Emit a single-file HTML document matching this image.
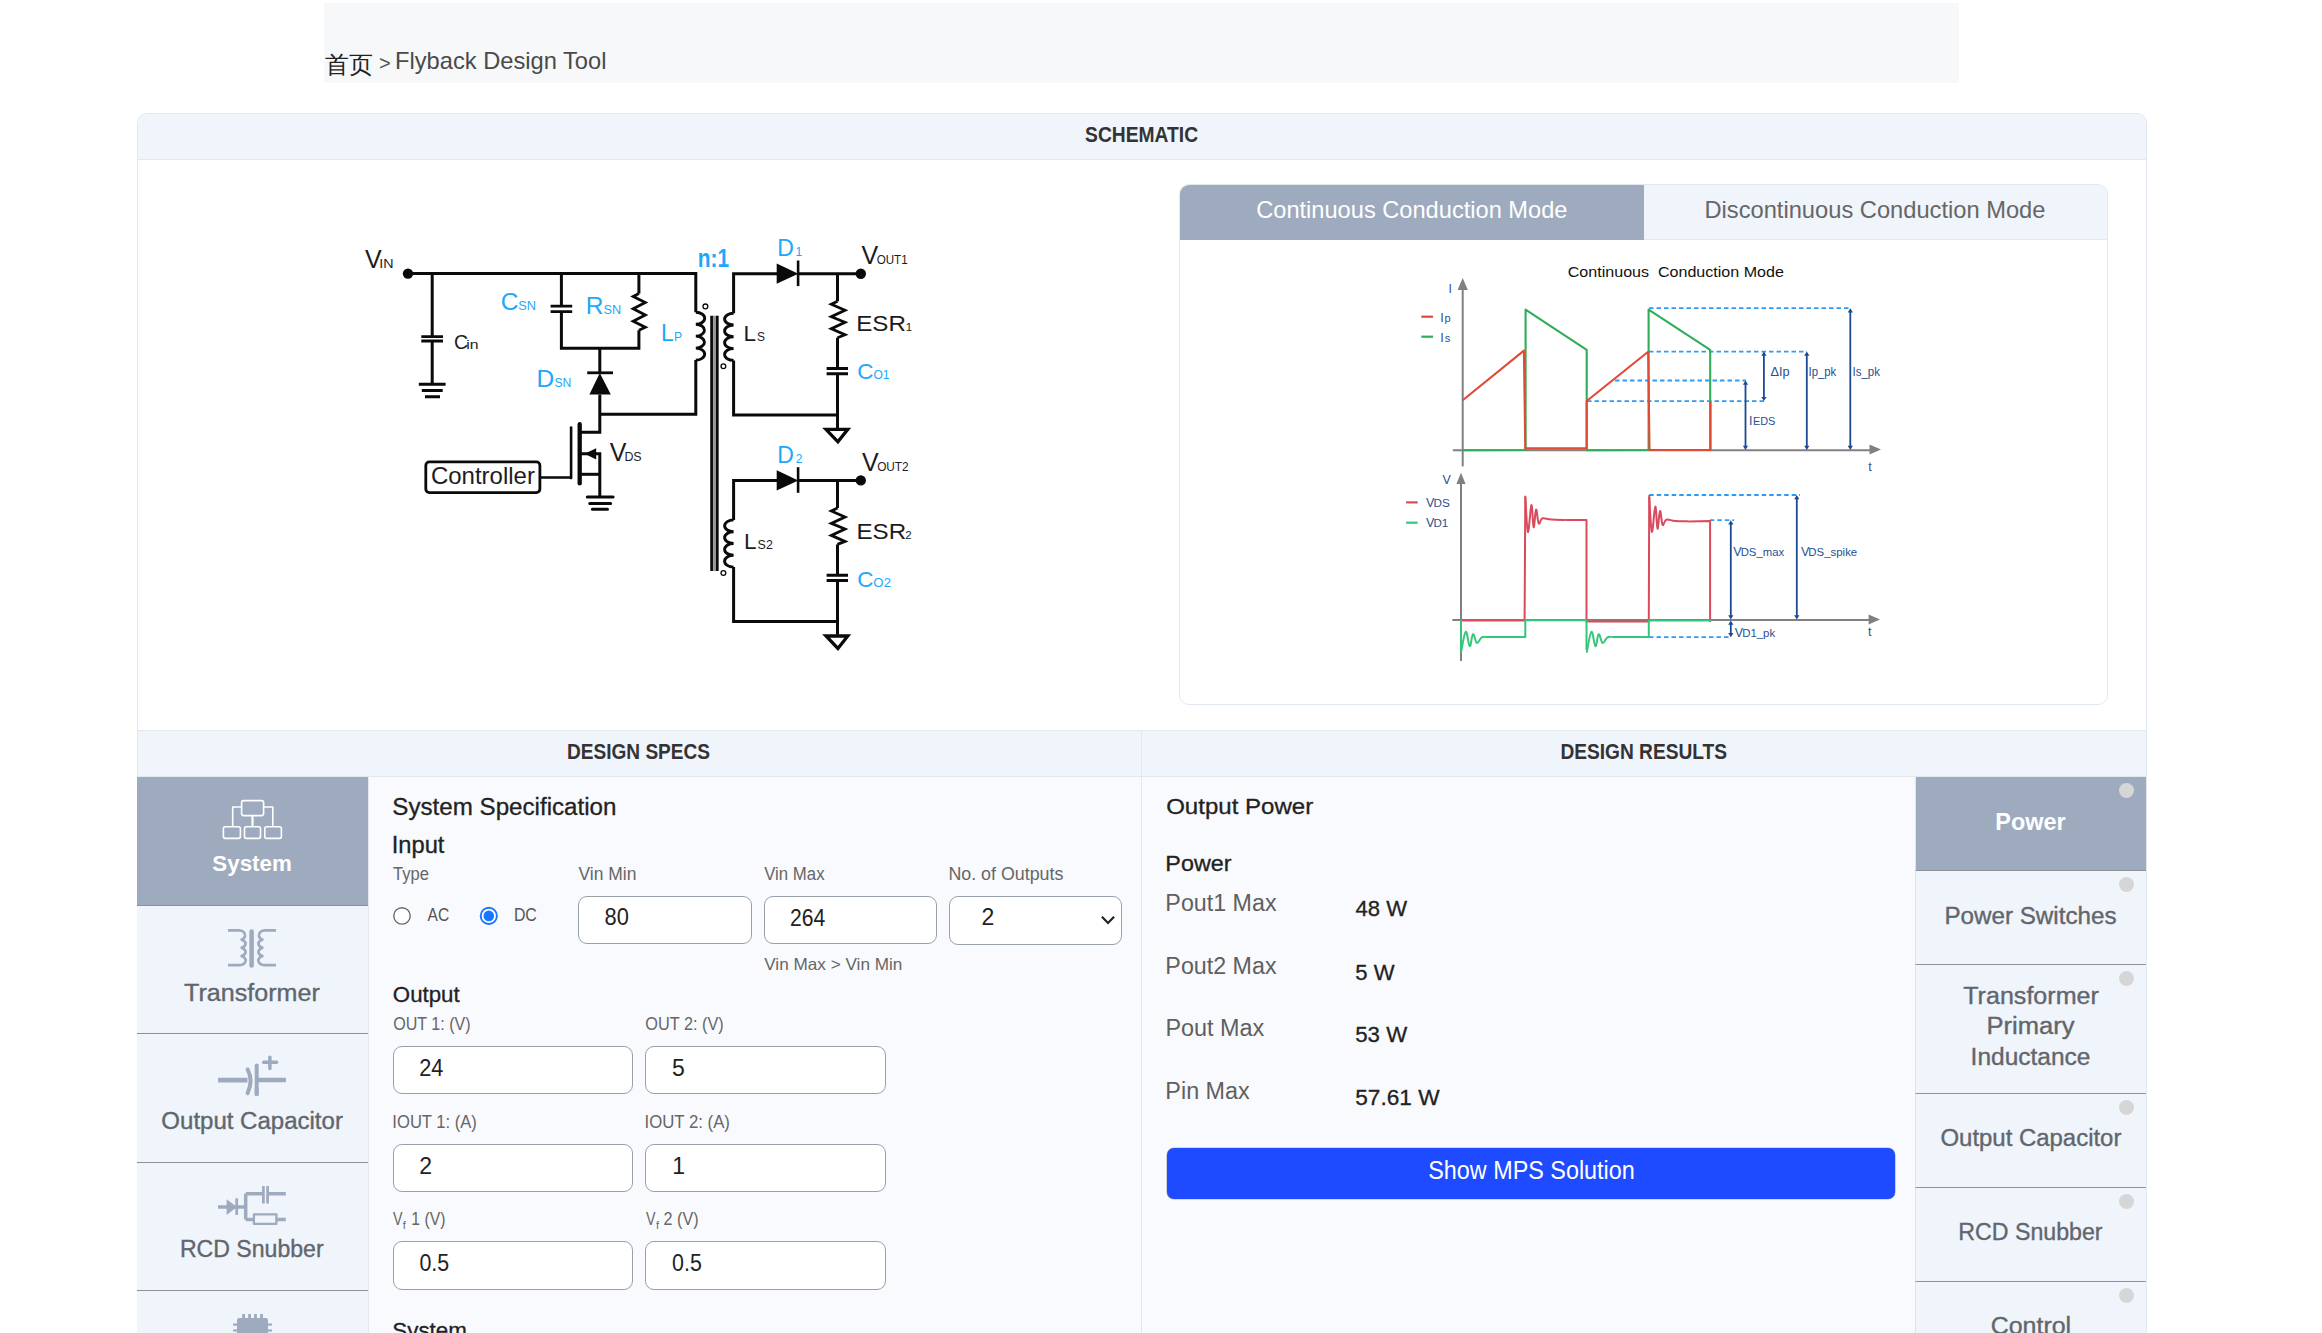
<!DOCTYPE html><html><head><meta charset="utf-8"><title>Flyback Design Tool</title><style>
*{box-sizing:border-box;margin:0;padding:0}
html,body{width:2322px;height:1333px;overflow:hidden;background:#fff;font-family:"Liberation Sans",sans-serif}
.a{position:absolute}
#crumb{left:324px;top:3px;width:1635px;height:80px;background:#f7f8fa}
#schem{left:137px;top:113px;width:2010px;height:618px;border:1px solid #e2e8f0;border-bottom:none;border-radius:10px 10px 0 0;background:#fff}
#schemh{left:138px;top:114px;width:2008px;height:46px;background:#f0f4fb;border-bottom:1px solid #e2e8f0;border-radius:9px 9px 0 0}
#chart{left:1179px;top:184px;width:929px;height:521px;border:1px solid #e2e8f0;border-radius:10px;background:#fff}
#ccm{left:1180px;top:185px;width:464px;height:55px;background:#9eabbe;border-radius:9px 0 0 0}
#dcm{left:1644px;top:185px;width:463px;height:55px;background:#f0f4fb;border-radius:0 9px 0 0;border-bottom:1px solid #e2e8f0}
#ccmline{left:1180px;top:239px;width:464px;height:1px;background:#e2e8f0}
#dsh{left:137px;top:730px;width:2010px;height:47px;background:#f0f4fb;border:1px solid #e2e8f0}
#dsb{left:137px;top:777px;width:2010px;height:600px;background:#f8fafd;border-left:1px solid #e2e8f0;border-right:1px solid #e2e8f0}
#vdiv{left:1141px;top:730px;width:1px;height:603px;background:#e2e8f0}
.tab{position:absolute;background:#f0f4fb;border-bottom:1px solid #8e9298}
.sel{background:#9eabbe}
.inp{position:absolute;background:#fff;border:1px solid #98a0aa;border-radius:9px}
#btn{left:1167px;top:1148px;width:728px;height:51px;background:#1e4bff;border-radius:7px;box-shadow:0 0 0 0.6px rgba(60,60,60,.35)}
.dot{position:absolute;width:15px;height:15px;border-radius:50%;background:#d6d6d6}
svg{position:absolute;left:0;top:0}
text{font-family:"Liberation Sans",sans-serif}
</style></head><body>
<div class="a" id="crumb"></div>
<div class="a" id="schem"></div><div class="a" id="schemh"></div>
<div class="a" id="chart"></div><div class="a" id="ccm"></div><div class="a" id="dcm"></div>
<div class="a" id="dsh"></div><div class="a" id="dsb"></div><div class="a" id="vdiv"></div>
<div class="tab sel" style="left:137px;top:777px;width:231px;height:129px"></div>
<div class="tab" style="left:137px;top:906px;width:231px;height:128px"></div>
<div class="tab" style="left:137px;top:1034px;width:231px;height:129px"></div>
<div class="tab" style="left:137px;top:1163px;width:231px;height:128px"></div>
<div class="tab" style="left:137px;top:1291px;width:231px;height:129px"></div>
<div class="tab sel" style="left:1915px;top:777px;width:231px;height:94px;border-left:1px solid #dfe4ec"></div>
<div class="dot" style="left:2119px;top:783px"></div>
<div class="tab" style="left:1915px;top:871px;width:231px;height:94px;border-left:1px solid #dfe4ec"></div>
<div class="dot" style="left:2119px;top:877px"></div>
<div class="tab" style="left:1915px;top:965px;width:231px;height:129px;border-left:1px solid #dfe4ec"></div>
<div class="dot" style="left:2119px;top:971px"></div>
<div class="tab" style="left:1915px;top:1094px;width:231px;height:94px;border-left:1px solid #dfe4ec"></div>
<div class="dot" style="left:2119px;top:1100px"></div>
<div class="tab" style="left:1915px;top:1188px;width:231px;height:94px;border-left:1px solid #dfe4ec"></div>
<div class="dot" style="left:2119px;top:1194px"></div>
<div class="tab" style="left:1915px;top:1282px;width:231px;height:118px;border-left:1px solid #dfe4ec"></div>
<div class="dot" style="left:2119px;top:1288px"></div>
<div class="inp" style="left:578px;top:896px;width:174px;height:48px"></div>
<div class="inp" style="left:764px;top:896px;width:173px;height:48px"></div>
<div class="inp" style="left:949px;top:896px;width:173px;height:49px"></div>
<div class="inp" style="left:393px;top:1046px;width:240px;height:48px"></div>
<div class="inp" style="left:645px;top:1046px;width:241px;height:48px"></div>
<div class="inp" style="left:393px;top:1144px;width:240px;height:48px"></div>
<div class="inp" style="left:645px;top:1144px;width:241px;height:48px"></div>
<div class="inp" style="left:393px;top:1241px;width:240px;height:49px"></div>
<div class="inp" style="left:645px;top:1241px;width:241px;height:49px"></div>
<div class="a" id="btn"></div>
<div class="a" style="left:368px;top:777px;width:1px;height:556px;background:#e3e8ef"></div>
<svg width="2322" height="1333" viewBox="0 0 2322 1333"><text x="324.5" y="73.3" font-size="24" fill="#222">首页</text><text x="379.11" y="70.2" font-size="20" fill="#555" >&gt;</text><text x="394.99" y="69.0" font-size="24" fill="#4a4a4a" textLength="211.48" lengthAdjust="spacingAndGlyphs" >Flyback Design Tool</text><text x="1085.05" y="141.7" font-size="21.5" fill="#333" font-weight="700" textLength="113.07" lengthAdjust="spacingAndGlyphs" >SCHEMATIC</text><text x="567.02" y="759.1" font-size="21.5" fill="#333" font-weight="700" textLength="143.02" lengthAdjust="spacingAndGlyphs" >DESIGN SPECS</text><text x="1560.43" y="759.1" font-size="21.5" fill="#333" font-weight="700" textLength="166.61" lengthAdjust="spacingAndGlyphs" >DESIGN RESULTS</text><text x="1256.20" y="217.8" font-size="24.5" fill="#fff" textLength="311.25" lengthAdjust="spacingAndGlyphs" >Continuous Conduction Mode</text><text x="1704.46" y="217.8" font-size="24.5" fill="#666" textLength="341.00" lengthAdjust="spacingAndGlyphs" >Discontinuous Conduction Mode</text><circle cx="408" cy="273.6" r="5.2" fill="#0a0a0a"/><path d="M408,273.6 H695.8 V312.2" fill="none" stroke="#0a0a0a" stroke-width="3.0" stroke-linecap="butt" stroke-linejoin="miter" /><path d="M432.2,273.6 V336.6" fill="none" stroke="#0a0a0a" stroke-width="3.0" stroke-linecap="butt" stroke-linejoin="miter" /><path d="M421.3,336.6 H443 M421.3,341 H443" fill="none" stroke="#0a0a0a" stroke-width="2.8" stroke-linecap="butt" stroke-linejoin="miter" /><path d="M432.2,341 V384.2" fill="none" stroke="#0a0a0a" stroke-width="3.0" stroke-linecap="butt" stroke-linejoin="miter" /><path d="M418.8,384.2 H445.6 M421.8,390.6 H442.7 M425,396.7 H440" fill="none" stroke="#0a0a0a" stroke-width="3.0" stroke-linecap="butt" stroke-linejoin="miter" /><path d="M561.4,273.6 V306.2" fill="none" stroke="#0a0a0a" stroke-width="3.0" stroke-linecap="butt" stroke-linejoin="miter" /><path d="M550.6,306.2 H572.2 M550.6,311.6 H572.2" fill="none" stroke="#0a0a0a" stroke-width="2.8" stroke-linecap="butt" stroke-linejoin="miter" /><path d="M561.4,311.6 V348.2 H638.9 V330.2" fill="none" stroke="#0a0a0a" stroke-width="3.0" stroke-linecap="butt" stroke-linejoin="miter" /><path d="M638.9,273.6 V293.6" fill="none" stroke="#0a0a0a" stroke-width="3.0" stroke-linecap="butt" stroke-linejoin="miter" /><path d="M638.9,293.6 L633.2,296.5 L645.3,302.6 L633.2,308.8 L645.3,315.0 L633.2,321.2 L645.3,327.3 L638.9,330.2" fill="none" stroke="#0a0a0a" stroke-width="2.8" stroke-linecap="butt" stroke-linejoin="miter" /><path d="M599.8,348.2 V372.8" fill="none" stroke="#0a0a0a" stroke-width="3.0" stroke-linecap="butt" stroke-linejoin="miter" /><path d="M587.2,372.8 H613" fill="none" stroke="#0a0a0a" stroke-width="2.8" stroke-linecap="butt" stroke-linejoin="miter" /><polygon points="599.8,373 589.4,394.6 610.8,394.6" fill="#0a0a0a"/><path d="M599.8,394.5 V432.3 H580" fill="none" stroke="#0a0a0a" stroke-width="3.0" stroke-linecap="butt" stroke-linejoin="miter" /><path d="M599.8,414.3 H695.8 V360.1" fill="none" stroke="#0a0a0a" stroke-width="3.0" stroke-linecap="butt" stroke-linejoin="miter" /><path d="M695.8,312.2 A8.9,5.987500000000004 0 0 1 695.8,324.18 A8.9,5.987500000000004 0 0 1 695.8,336.15 A8.9,5.987500000000004 0 0 1 695.8,348.12 A8.9,5.987500000000004 0 0 1 695.8,360.10" fill="none" stroke="#0a0a0a" stroke-width="2.9" stroke-linecap="butt" stroke-linejoin="miter" /><circle cx="705.4" cy="306.4" r="2.4" fill="none" stroke="#0a0a0a" stroke-width="1.3"/><rect x="712.8" y="315.7" width="3.4" height="255.3" fill="#9a9a9a"/><path d="M711.6,315.7 V571 M717.3,315.7 V571" fill="none" stroke="#0a0a0a" stroke-width="2.7" stroke-linecap="butt" stroke-linejoin="miter" /><path d="M579.7,424.2 V483.4" fill="none" stroke="#0a0a0a" stroke-width="4.3" stroke-linecap="round" stroke-linejoin="miter" /><path d="M571.1,427.5 V478.1" fill="none" stroke="#0a0a0a" stroke-width="2.6" stroke-linecap="round" stroke-linejoin="miter" /><path d="M539.9,477.5 H571.1" fill="none" stroke="#0a0a0a" stroke-width="2.6" stroke-linecap="butt" stroke-linejoin="miter" /><path d="M579.7,453.8 H599.8 V496.9" fill="none" stroke="#0a0a0a" stroke-width="3.0" stroke-linecap="butt" stroke-linejoin="miter" /><polygon points="584.6,453.8 596.2,448.2 596.2,459.4" fill="#0a0a0a"/><path d="M579.7,474.3 H599.8" fill="none" stroke="#0a0a0a" stroke-width="3.0" stroke-linecap="butt" stroke-linejoin="miter" /><path d="M587.3,496.9 H613.1 M589.7,503.4 H610.6 M592.4,509.3 H607.5" fill="none" stroke="#0a0a0a" stroke-width="3.0" stroke-linecap="round" stroke-linejoin="miter" /><rect x="425.8" y="461.9" width="114.1" height="30.7" rx="3.5" fill="none" stroke="#0a0a0a" stroke-width="2.8"/><path d="M733.6,313.2 V273.7 H777" fill="none" stroke="#0a0a0a" stroke-width="3.0" stroke-linecap="butt" stroke-linejoin="miter" /><polygon points="776.7,263.6 776.7,283.8 798.3,273.7" fill="#0a0a0a"/><path d="M798.1,260.5 V286.1" fill="none" stroke="#0a0a0a" stroke-width="2.6" stroke-linecap="butt" stroke-linejoin="miter" /><path d="M798.1,273.7 H860.8" fill="none" stroke="#0a0a0a" stroke-width="3.0" stroke-linecap="butt" stroke-linejoin="miter" /><circle cx="860.8" cy="273.7" r="5.2" fill="#0a0a0a"/><path d="M733.6,313.2 A9.0,5.899999999999999 0 0 0 733.6,325.00 A9.0,5.899999999999999 0 0 0 733.6,336.80 A9.0,5.899999999999999 0 0 0 733.6,348.60 A9.0,5.899999999999999 0 0 0 733.6,360.40" fill="none" stroke="#0a0a0a" stroke-width="2.9" stroke-linecap="butt" stroke-linejoin="miter" /><circle cx="723.4" cy="366.3" r="2.4" fill="none" stroke="#0a0a0a" stroke-width="1.3"/><path d="M733.6,360.4 V414.9 H837.5" fill="none" stroke="#0a0a0a" stroke-width="3.0" stroke-linecap="butt" stroke-linejoin="miter" /><path d="M837.5,273.7 V301.3" fill="none" stroke="#0a0a0a" stroke-width="3.0" stroke-linecap="butt" stroke-linejoin="miter" /><path d="M837.5,301.3 L831.3,304.3 L845,310.3 L831.3,316.7 L845,322.3 L831.3,328.7 L845,334.7 L837.5,337.7" fill="none" stroke="#0a0a0a" stroke-width="2.8" stroke-linecap="butt" stroke-linejoin="miter" /><path d="M837.5,337.7 V368.5" fill="none" stroke="#0a0a0a" stroke-width="3.0" stroke-linecap="butt" stroke-linejoin="miter" /><path d="M826.6,368.5 H848 M826.6,373.8 H848" fill="none" stroke="#0a0a0a" stroke-width="2.9" stroke-linecap="butt" stroke-linejoin="miter" /><path d="M837.5,373.8 V428.1" fill="none" stroke="#0a0a0a" stroke-width="3.0" stroke-linecap="butt" stroke-linejoin="miter" /><polygon points="826,429.3 847.8,429.3 837.9,441.8" fill="none" stroke="#0a0a0a" stroke-width="3.3" stroke-linejoin="miter"/><path d="M733.6,519.9 V480.4 H777" fill="none" stroke="#0a0a0a" stroke-width="3.0" stroke-linecap="butt" stroke-linejoin="miter" /><polygon points="776.7,470.3 776.7,490.5 798.3,480.4" fill="#0a0a0a"/><path d="M798.1,467.2 V492.8" fill="none" stroke="#0a0a0a" stroke-width="2.6" stroke-linecap="butt" stroke-linejoin="miter" /><path d="M798.1,480.4 H860.8" fill="none" stroke="#0a0a0a" stroke-width="3.0" stroke-linecap="butt" stroke-linejoin="miter" /><circle cx="860.8" cy="480.4" r="5.2" fill="#0a0a0a"/><path d="M733.6,519.9 A9.0,5.8999999999999915 0 0 0 733.6,531.70 A9.0,5.8999999999999915 0 0 0 733.6,543.50 A9.0,5.8999999999999915 0 0 0 733.6,555.30 A9.0,5.8999999999999915 0 0 0 733.6,567.10" fill="none" stroke="#0a0a0a" stroke-width="2.9" stroke-linecap="butt" stroke-linejoin="miter" /><circle cx="723.4" cy="573.0" r="2.4" fill="none" stroke="#0a0a0a" stroke-width="1.3"/><path d="M733.6,567.0999999999999 V621.5999999999999 H837.5" fill="none" stroke="#0a0a0a" stroke-width="3.0" stroke-linecap="butt" stroke-linejoin="miter" /><path d="M837.5,480.4 V508.0" fill="none" stroke="#0a0a0a" stroke-width="3.0" stroke-linecap="butt" stroke-linejoin="miter" /><path d="M837.5,508.0 L831.3,511.0 L845,517.0 L831.3,523.4 L845,529.0 L831.3,535.4 L845,541.4 L837.5,544.4" fill="none" stroke="#0a0a0a" stroke-width="2.8" stroke-linecap="butt" stroke-linejoin="miter" /><path d="M837.5,544.4 V575.2" fill="none" stroke="#0a0a0a" stroke-width="3.0" stroke-linecap="butt" stroke-linejoin="miter" /><path d="M826.6,575.2 H848 M826.6,580.5 H848" fill="none" stroke="#0a0a0a" stroke-width="2.9" stroke-linecap="butt" stroke-linejoin="miter" /><path d="M837.5,580.5 V634.8" fill="none" stroke="#0a0a0a" stroke-width="3.0" stroke-linecap="butt" stroke-linejoin="miter" /><polygon points="826,636.0 847.8,636.0 837.9,648.5" fill="none" stroke="#0a0a0a" stroke-width="3.3" stroke-linejoin="miter"/><text x="365.09" y="268.4" font-size="25" fill="#1c1c1c" >V</text><text x="379.28" y="268.4" font-size="12.5" fill="#1c1c1c" textLength="14.28" lengthAdjust="spacingAndGlyphs" >IN</text><text x="454.11" y="348.5" font-size="19.5" fill="#1c1c1c" >C</text><text x="466.24" y="348.5" font-size="12" fill="#1c1c1c" textLength="12.28" lengthAdjust="spacingAndGlyphs" >in</text><text x="500.76" y="309.8" font-size="24.5" fill="#1ea7fb" >C</text><text x="518.22" y="309.8" font-size="12.2" fill="#1ea7fb" textLength="17.83" lengthAdjust="spacingAndGlyphs" >SN</text><text x="585.79" y="314.0" font-size="24.5" fill="#1ea7fb" >R</text><text x="603.62" y="314.0" font-size="12.2" fill="#1ea7fb" textLength="17.61" lengthAdjust="spacingAndGlyphs" >SN</text><text x="661.01" y="341.0" font-size="23" fill="#1ea7fb" >L</text><text x="674.00" y="341.0" font-size="12.2" fill="#1ea7fb" >P</text><text x="536.59" y="387.3" font-size="24.5" fill="#1ea7fb" >D</text><text x="554.45" y="387.3" font-size="12.2" fill="#1ea7fb" textLength="16.95" lengthAdjust="spacingAndGlyphs" >SN</text><text x="697.72" y="267.0" font-size="25" fill="#1ea7fb" font-weight="700" textLength="31.36" lengthAdjust="spacingAndGlyphs" >n:1</text><text x="777.21" y="256.4" font-size="23" fill="#1ea7fb" >D</text><text x="795.39" y="256.4" font-size="12" fill="#1ea7fb" >1</text><text x="777.21" y="463.3" font-size="23" fill="#1ea7fb" >D</text><text x="795.70" y="463.3" font-size="12" fill="#1ea7fb" >2</text><text x="861.59" y="263.8" font-size="25" fill="#1c1c1c" >V</text><text x="876.65" y="263.8" font-size="12.5" fill="#1c1c1c" textLength="31.02" lengthAdjust="spacingAndGlyphs" >OUT1</text><text x="862.09" y="470.6" font-size="25" fill="#1c1c1c" >V</text><text x="877.14" y="470.6" font-size="12.5" fill="#1c1c1c" textLength="31.56" lengthAdjust="spacingAndGlyphs" >OUT2</text><text x="856.22" y="330.5" font-size="22.3" fill="#1c1c1c" textLength="49.70" lengthAdjust="spacingAndGlyphs" >ESR</text><text x="905.82" y="330.5" font-size="11.5" fill="#1c1c1c" >1</text><text x="856.42" y="538.6" font-size="22.3" fill="#1c1c1c" textLength="49.70" lengthAdjust="spacingAndGlyphs" >ESR</text><text x="905.22" y="538.6" font-size="11.5" fill="#1c1c1c" >2</text><text x="743.45" y="341.4" font-size="22.5" fill="#1c1c1c" >L</text><text x="757.06" y="341.4" font-size="12" fill="#1c1c1c" >S</text><text x="744.05" y="549.0" font-size="22.5" fill="#1c1c1c" >L</text><text x="757.64" y="549.0" font-size="12" fill="#1c1c1c" textLength="15.19" lengthAdjust="spacingAndGlyphs" >S2</text><text x="857.26" y="379.4" font-size="22.5" fill="#1ea7fb" >C</text><text x="873.43" y="379.4" font-size="12" fill="#1ea7fb" textLength="16.06" lengthAdjust="spacingAndGlyphs" >O1</text><text x="857.26" y="586.9" font-size="22.5" fill="#1ea7fb" >C</text><text x="873.38" y="586.9" font-size="12" fill="#1ea7fb" textLength="17.59" lengthAdjust="spacingAndGlyphs" >O2</text><text x="430.98" y="484.0" font-size="24" fill="#1c1c1c" textLength="103.92" lengthAdjust="spacingAndGlyphs" >Controller</text><text x="609.79" y="460.8" font-size="25" fill="#1c1c1c" >V</text><text x="624.38" y="460.8" font-size="12.5" fill="#1c1c1c" textLength="17.29" lengthAdjust="spacingAndGlyphs" >DS</text><path d="M1462.7,289 V466.4" fill="none" stroke="#808080" stroke-width="2.0" stroke-linejoin="round" /><polygon points="1462.7,278 1457.6,290 1467.8,290" fill="#808080"/><path d="M1452.8,450.2 H1871" fill="none" stroke="#808080" stroke-width="2.0" stroke-linejoin="round" /><polygon points="1881,449.6 1869.5,444.6 1869.5,454.6" fill="#808080"/><path d="M1649,308.2 H1851" fill="none" stroke="#2e9cf5" stroke-width="1.8" stroke-linejoin="round" stroke-dasharray="4.5,3"/><path d="M1649,351.6 H1807" fill="none" stroke="#2e9cf5" stroke-width="1.8" stroke-linejoin="round" stroke-dasharray="4.5,3"/><path d="M1615,380.5 H1746" fill="none" stroke="#2e9cf5" stroke-width="1.8" stroke-linejoin="round" stroke-dasharray="4.5,3"/><path d="M1587,401.2 H1764" fill="none" stroke="#2e9cf5" stroke-width="1.8" stroke-linejoin="round" stroke-dasharray="4.5,3"/><path d="M1462.7,450.2 L1525.6,450 L1525.6,309.6 L1586.7,349.8 L1586.7,450.2 L1648.6,450 L1648.6,309.6 L1710.2,349.9 L1710.2,450" fill="none" stroke="#2fae5a" stroke-width="2.1" stroke-linejoin="round" /><path d="M1462.7,400.2 L1523.9,350.6 L1525.3,448.4 L1586.7,448.4 L1586.7,401 L1648.2,351.8 L1649.5,450 L1710.5,450 L1710.5,401.2" fill="none" stroke="#e04a35" stroke-width="2.1" stroke-linejoin="round" /><path d="M1745.5,383.5 V447" fill="none" stroke="#1b4a90" stroke-width="1.8" stroke-linejoin="round" /><polygon points="1745.5,380.5 1742.9,384.7 1748.1,384.7" fill="#1b4a90"/><polygon points="1745.5,450 1742.9,445.8 1748.1,445.8" fill="#1b4a90"/><path d="M1763.9,354.6 V398.1" fill="none" stroke="#1b4a90" stroke-width="1.8" stroke-linejoin="round" /><polygon points="1763.9,351.6 1761.3000000000002,355.8 1766.5,355.8" fill="#1b4a90"/><polygon points="1763.9,401.1 1761.3000000000002,396.90000000000003 1766.5,396.90000000000003" fill="#1b4a90"/><path d="M1806.8,354.6 V447" fill="none" stroke="#1b4a90" stroke-width="1.8" stroke-linejoin="round" /><polygon points="1806.8,351.6 1804.2,355.8 1809.3999999999999,355.8" fill="#1b4a90"/><polygon points="1806.8,450 1804.2,445.8 1809.3999999999999,445.8" fill="#1b4a90"/><path d="M1850.3,311.2 V447" fill="none" stroke="#1b4a90" stroke-width="1.8" stroke-linejoin="round" /><polygon points="1850.3,308.2 1847.7,312.4 1852.8999999999999,312.4" fill="#1b4a90"/><polygon points="1850.3,450 1847.7,445.8 1852.8999999999999,445.8" fill="#1b4a90"/><path d="M1421.3,316.7 H1433.1" fill="none" stroke="#e04a35" stroke-width="2.2" stroke-linejoin="round" /><path d="M1421.3,336.7 H1433.1" fill="none" stroke="#2fae5a" stroke-width="2.2" stroke-linejoin="round" /><text x="1448.39" y="293.3" font-size="12" fill="#2a4f8e" >I</text><text x="1440.15" y="322.2" font-size="12.5" fill="#2a4f8e" >I</text><text x="1444.49" y="321.8" font-size="11" fill="#2a4f8e" >p</text><text x="1440.15" y="341.6" font-size="12.5" fill="#2a4f8e" >I</text><text x="1444.69" y="341.6" font-size="11" fill="#2a4f8e" >s</text><text x="1770.42" y="376.3" font-size="12.5" fill="#2a4f8e" textLength="19.11" lengthAdjust="spacingAndGlyphs" >ΔIp</text><text x="1808.55" y="376.3" font-size="12" fill="#2a4f8e" textLength="27.73" lengthAdjust="spacingAndGlyphs" >Ip_pk</text><text x="1852.54" y="376.3" font-size="12" fill="#2a4f8e" textLength="27.44" lengthAdjust="spacingAndGlyphs" >Is_pk</text><text x="1749.05" y="425.0" font-size="12.5" fill="#2a4f8e" >I</text><text x="1752.91" y="425.0" font-size="10.5" fill="#2a4f8e" textLength="22.39" lengthAdjust="spacingAndGlyphs" >EDS</text><text x="1868.31" y="471.2" font-size="12.5" fill="#2a4f8e" >t</text><text x="1567.78" y="276.5" font-size="13.8" fill="#111" textLength="216.13" lengthAdjust="spacingAndGlyphs" >Continuous  Conduction Mode</text><path d="M1461,483 V661" fill="none" stroke="#808080" stroke-width="2.0" stroke-linejoin="round" /><polygon points="1461,472.7 1456.4,484 1465.6,484" fill="#808080"/><path d="M1452.3,620 H1870" fill="none" stroke="#808080" stroke-width="2.0" stroke-linejoin="round" /><polygon points="1880,619.4 1868.6,614.4 1868.6,624.4" fill="#808080"/><path d="M1649.2,495 H1800" fill="none" stroke="#2e9cf5" stroke-width="1.8" stroke-linejoin="round" stroke-dasharray="4.5,3"/><path d="M1709.8,520.2 H1734" fill="none" stroke="#2e9cf5" stroke-width="1.8" stroke-linejoin="round" stroke-dasharray="4.5,3"/><path d="M1649,637.2 H1731.5" fill="none" stroke="#2e9cf5" stroke-width="1.8" stroke-linejoin="round" stroke-dasharray="4.5,3"/><path d="M1461,620.6 L1524.6,620.4 L1525.3,497" fill="none" stroke="#d94a5c" stroke-width="2.0" stroke-linejoin="round" /><path d="M1525.30,495.80 C1525.78,502.42 1526.78,530.19 1527.90,531.90 C1529.02,533.61 1530.35,505.94 1531.40,505.10 C1532.44,504.26 1532.74,526.48 1533.60,527.30 C1534.46,528.13 1535.16,510.32 1536.10,509.60 C1537.03,508.88 1537.53,521.80 1538.70,523.40 C1539.87,525.00 1540.19,519.00 1542.50,518.30 C1544.81,517.60 1547.12,519.29 1551.30,519.60 C1555.48,519.91 1562.73,519.93 1565.30,520.00" fill="none" stroke="#d94a5c" stroke-width="2.0" stroke-linejoin="round" /><path d="M1565.3,520 L1586.5,520 L1586.5,620.6 L1586.5,621.6 L1648.8,621.6 L1649.2,497" fill="none" stroke="#d94a5c" stroke-width="2.0" stroke-linejoin="round" /><path d="M1649.20,495.00 C1649.68,501.76 1650.68,529.79 1651.80,531.90 C1652.92,534.01 1654.25,507.09 1655.30,506.50 C1656.35,505.91 1656.64,527.88 1657.50,528.70 C1658.36,529.53 1659.07,511.72 1660.00,511.00 C1660.93,510.28 1661.43,523.20 1662.60,524.80 C1663.77,526.39 1664.09,520.40 1666.40,519.70 C1668.71,519.00 1671.02,520.69 1675.20,521.00 C1679.38,521.31 1686.63,521.33 1689.20,521.40" fill="none" stroke="#d94a5c" stroke-width="2.0" stroke-linejoin="round" /><path d="M1689.2,521.4 L1710.1,521 L1710.1,622" fill="none" stroke="#d94a5c" stroke-width="2.0" stroke-linejoin="round" /><path d="M1461,620 V650" fill="none" stroke="#34c77b" stroke-width="2.0" stroke-linejoin="round" /><path d="M1461.00,652.60 C1461.86,648.79 1464.11,632.97 1465.70,631.80 C1467.30,630.63 1468.36,645.76 1469.70,646.20 C1471.04,646.64 1471.68,634.79 1473.00,634.20 C1474.32,633.61 1475.34,642.39 1476.90,643.00 C1478.46,643.61 1479.83,638.62 1481.50,637.50 C1483.17,636.38 1485.17,637.01 1486.00,636.90" fill="none" stroke="#34c77b" stroke-width="2.0" stroke-linejoin="round" /><path d="M1486,636.9 H1525.3 V620.2 H1586.5 V650" fill="none" stroke="#34c77b" stroke-width="2.0" stroke-linejoin="round" /><path d="M1586.70,652.60 C1587.56,648.79 1589.81,632.97 1591.40,631.80 C1593.00,630.63 1594.06,645.76 1595.40,646.20 C1596.74,646.64 1597.38,634.79 1598.70,634.20 C1600.02,633.61 1601.04,642.39 1602.60,643.00 C1604.16,643.61 1605.53,638.62 1607.20,637.50 C1608.87,636.38 1610.88,637.01 1611.70,636.90" fill="none" stroke="#34c77b" stroke-width="2.0" stroke-linejoin="round" /><path d="M1611.7,636.9 H1648.8 V620.4 H1711" fill="none" stroke="#34c77b" stroke-width="2.0" stroke-linejoin="round" /><path d="M1730.8,523.5 V616" fill="none" stroke="#1b4a90" stroke-width="1.8" stroke-linejoin="round" /><polygon points="1730.8,520.2 1728.2,524.4000000000001 1733.3999999999999,524.4000000000001" fill="#1b4a90"/><polygon points="1730.8,619.4 1728.2,615.1999999999999 1733.3999999999999,615.1999999999999" fill="#1b4a90"/><path d="M1730.8,623 V634" fill="none" stroke="#1b4a90" stroke-width="1.8" stroke-linejoin="round" /><polygon points="1730.8,620.6 1728.2,624.8000000000001 1733.3999999999999,624.8000000000001" fill="#1b4a90"/><polygon points="1730.8,637.2 1728.2,633.0 1733.3999999999999,633.0" fill="#1b4a90"/><path d="M1796.8,498.5 V616" fill="none" stroke="#1b4a90" stroke-width="1.8" stroke-linejoin="round" /><polygon points="1796.8,495 1794.2,499.2 1799.3999999999999,499.2" fill="#1b4a90"/><polygon points="1796.8,619.4 1794.2,615.1999999999999 1799.3999999999999,615.1999999999999" fill="#1b4a90"/><path d="M1406.1,502.4 H1417.7" fill="none" stroke="#d94a5c" stroke-width="2.2" stroke-linejoin="round" /><path d="M1406.1,522.7 H1417.7" fill="none" stroke="#34c77b" stroke-width="2.2" stroke-linejoin="round" /><text x="1442.55" y="484.2" font-size="12.5" fill="#2a4f8e" >V</text><text x="1426.05" y="507.3" font-size="12.5" fill="#2a4f8e" >V</text><text x="1433.44" y="507.3" font-size="10" fill="#2a4f8e" textLength="16.30" lengthAdjust="spacingAndGlyphs" >DS</text><text x="1426.05" y="527.3" font-size="12.5" fill="#2a4f8e" >V</text><text x="1433.45" y="527.3" font-size="10" fill="#2a4f8e" textLength="14.82" lengthAdjust="spacingAndGlyphs" >D1</text><text x="1733.25" y="555.6" font-size="12.5" fill="#2a4f8e" >V</text><text x="1740.67" y="555.6" font-size="11" fill="#2a4f8e" textLength="43.45" lengthAdjust="spacingAndGlyphs" >DS_max</text><text x="1800.95" y="555.6" font-size="12.5" fill="#2a4f8e" >V</text><text x="1808.36" y="555.6" font-size="11" fill="#2a4f8e" textLength="48.84" lengthAdjust="spacingAndGlyphs" >DS_spike</text><text x="1734.75" y="636.8" font-size="12.5" fill="#2a4f8e" >V</text><text x="1742.17" y="636.8" font-size="11" fill="#2a4f8e" textLength="32.92" lengthAdjust="spacingAndGlyphs" >D1_pk</text><text x="1868.11" y="636.0" font-size="12.5" fill="#2a4f8e" >t</text><g fill="none" stroke="#fff" stroke-width="1.6" stroke-linejoin="round"><rect x="241.6" y="800.6" width="22" height="15" rx="2"/><rect x="223.4" y="826.8" width="17" height="11.6" rx="1.8"/><rect x="244.5" y="826.8" width="16" height="11.6" rx="1.8"/><rect x="264.8" y="826.8" width="16.6" height="11.6" rx="1.8"/><path d="M241.6,807 H232.7 V826.8 M263.6,807 H272.8 V826.8"/><path d="M252.5,815.6 V826.8" stroke-width="2.2"/></g><g fill="none" stroke="#9eabbe" stroke-width="2.7" stroke-linejoin="round"><path d="M228,930.4 H238.5 Q245.6,930.6 245,936 Q244.6,938.6 241.6,939.5 Q246,941.5 245.6,944 Q245.2,946.6 241.6,947.7 Q246,949.7 245.6,952.2 Q245.2,954.8 241.6,956 Q246.2,958.2 245.6,961 Q244.6,965.2 238.5,965.2 H228"/><path d="M276,930.4 H265.5 Q258.4,930.6 259,936 Q259.4,938.6 262.4,939.5 Q258,941.5 258.4,944 Q258.8,946.6 262.4,947.7 Q258,949.7 258.4,952.2 Q258.8,954.8 262.4,956 Q257.8,958.2 258.4,961 Q259.4,965.2 265.5,965.2 H276"/></g><path d="M251.6,931.5 V965.5" stroke="#9eabbe" stroke-width="4.5" stroke-linecap="round"/><g fill="none" stroke="#9eabbe"><path d="M218.1,1080.2 H247.5 M256.7,1080 H285.9" stroke-width="4.7"/><path d="M247.6,1069.4 Q253.5,1080.4 247.6,1093.2" stroke-width="4" stroke-linecap="round"/><path d="M256.7,1065.6 V1093.8" stroke-width="4" stroke-linecap="round"/><path d="M269.9,1057.3 V1068.6 M263.6,1062.3 H276.6" stroke-width="3.5" stroke-linecap="round"/></g><rect x="254.7" y="1088" width="4" height="7.8" fill="#9eabbe"/><g fill="none" stroke="#9eabbe" stroke-linejoin="round"><path d="M218,1207 H245.7 M245.7,1193.8 V1219.6 M245.7,1193.8 H263.4 M267.6,1193.8 H285.8 M245.7,1219.6 H253.9 M276.4,1219.6 H285.8" stroke-width="3.5"/><path d="M236.7,1198.2 V1215 M263.4,1186 V1203.4 M267.6,1186 V1203.4" stroke-width="2.7"/><rect x="253.9" y="1214.4" width="22.5" height="9.5" stroke-width="2.3"/></g><polygon points="226.6,1199.3 237,1207 226.6,1215" fill="#9eabbe"/><rect x="237" y="1318" width="31" height="30" rx="2.2" fill="#9eabbe"/><rect x="242.2" y="1314" width="2.8" height="4" fill="#9eabbe"/><rect x="248.2" y="1314" width="2.8" height="4" fill="#9eabbe"/><rect x="254.1" y="1314" width="2.8" height="4" fill="#9eabbe"/><rect x="260.1" y="1314" width="2.8" height="4" fill="#9eabbe"/><rect x="233.1" y="1323.5" width="3.9" height="2.2" fill="#9eabbe"/><rect x="268" y="1323.5" width="3.9" height="2.2" fill="#9eabbe"/><rect x="233.1" y="1329.4" width="3.9" height="2.2" fill="#9eabbe"/><rect x="268" y="1329.4" width="3.9" height="2.2" fill="#9eabbe"/><text x="212.36" y="871.3" font-size="22.5" fill="#fff" font-weight="700" textLength="79.43" lengthAdjust="spacingAndGlyphs" >System</text><text x="184.14" y="1000.9" font-size="23" fill="#61666c" textLength="135.67" lengthAdjust="spacingAndGlyphs" stroke="#61666c" stroke-width="0.35" >Transformer</text><text x="161.36" y="1128.9" font-size="23" fill="#61666c" textLength="181.54" lengthAdjust="spacingAndGlyphs" stroke="#61666c" stroke-width="0.35" >Output Capacitor</text><text x="179.91" y="1257.3" font-size="23" fill="#61666c" textLength="143.68" lengthAdjust="spacingAndGlyphs" stroke="#61666c" stroke-width="0.35" >RCD Snubber</text><text x="392.30" y="815.2" font-size="23.5" fill="#222" textLength="224.17" lengthAdjust="spacingAndGlyphs" stroke="#222" stroke-width="0.3" >System Specification</text><text x="391.72" y="852.8" font-size="23" fill="#222" textLength="52.66" lengthAdjust="spacingAndGlyphs" stroke="#222" stroke-width="0.3" >Input</text><text x="393.04" y="879.5" font-size="17.5" fill="#666" textLength="35.98" lengthAdjust="spacingAndGlyphs" >Type</text><text x="427.57" y="920.7" font-size="18" fill="#555" textLength="21.62" lengthAdjust="spacingAndGlyphs" >AC</text><text x="513.90" y="920.7" font-size="18" fill="#555" textLength="22.90" lengthAdjust="spacingAndGlyphs" >DC</text><text x="578.42" y="879.5" font-size="17.5" fill="#666" textLength="58.01" lengthAdjust="spacingAndGlyphs" >Vin Min</text><text x="764.23" y="880.2" font-size="17.5" fill="#666" textLength="60.35" lengthAdjust="spacingAndGlyphs" >Vin Max</text><text x="948.44" y="880.2" font-size="17.5" fill="#666" textLength="114.91" lengthAdjust="spacingAndGlyphs" >No. of Outputs</text><text x="604.55" y="925.3" font-size="23" fill="#222" textLength="24.30" lengthAdjust="spacingAndGlyphs" >80</text><text x="790.04" y="925.6" font-size="23" fill="#222" textLength="35.28" lengthAdjust="spacingAndGlyphs" >264</text><text x="981.44" y="924.7" font-size="23" fill="#222" >2</text><text x="764.22" y="969.6" font-size="16.5" fill="#666" textLength="138.18" lengthAdjust="spacingAndGlyphs" >Vin Max &gt; Vin Min</text><text x="392.85" y="1002.4" font-size="21.5" fill="#222" textLength="66.82" lengthAdjust="spacingAndGlyphs" stroke="#222" stroke-width="0.3" >Output</text><text x="393.14" y="1029.7" font-size="18" fill="#666" textLength="77.45" lengthAdjust="spacingAndGlyphs" >OUT 1: (V)</text><text x="645.33" y="1029.7" font-size="18" fill="#666" textLength="78.37" lengthAdjust="spacingAndGlyphs" >OUT 2: (V)</text><text x="419.21" y="1075.9" font-size="23" fill="#222" textLength="24.13" lengthAdjust="spacingAndGlyphs" >24</text><text x="671.98" y="1075.9" font-size="23" fill="#222" >5</text><text x="392.37" y="1127.8" font-size="18" fill="#666" textLength="84.55" lengthAdjust="spacingAndGlyphs" >IOUT 1: (A)</text><text x="644.56" y="1127.8" font-size="18" fill="#666" textLength="85.38" lengthAdjust="spacingAndGlyphs" >IOUT 2: (A)</text><text x="419.14" y="1173.7" font-size="23" fill="#222" >2</text><text x="672.25" y="1173.7" font-size="23" fill="#222" >1</text><text x="392.94" y="1225.2" font-size="18" fill="#666" textLength="9.53" lengthAdjust="spacingAndGlyphs" >V</text><text x="402.84" y="1228.8" font-size="11" fill="#666" >f</text><text x="411.30" y="1225.2" font-size="18" fill="#666" textLength="34.18" lengthAdjust="spacingAndGlyphs" >1 (V)</text><text x="646.04" y="1225.2" font-size="18" fill="#666" textLength="9.53" lengthAdjust="spacingAndGlyphs" >V</text><text x="655.94" y="1228.8" font-size="11" fill="#666" >f</text><text x="663.59" y="1225.2" font-size="18" fill="#666" textLength="35.01" lengthAdjust="spacingAndGlyphs" >2 (V)</text><text x="419.46" y="1270.7" font-size="23" fill="#222" textLength="29.73" lengthAdjust="spacingAndGlyphs" >0.5</text><text x="672.06" y="1270.7" font-size="23" fill="#222" textLength="29.73" lengthAdjust="spacingAndGlyphs" >0.5</text><text x="392.39" y="1338.0" font-size="22" fill="#222" textLength="74.49" lengthAdjust="spacingAndGlyphs" stroke="#222" stroke-width="0.3" >System</text><path d="M1101.9,916.8 L1108,923 L1114.1,916.8" fill="none" stroke="#222" stroke-width="2.2"/><circle cx="402" cy="915.9" r="8.2" fill="#fff" stroke="#6b6b6b" stroke-width="1.4"/><circle cx="488.8" cy="915.9" r="8.1" fill="#fff" stroke="#1a75ff" stroke-width="1.9"/><circle cx="488.8" cy="915.9" r="5.3" fill="#1a75ff"/><text x="1166.16" y="814.4" font-size="22.5" fill="#222" textLength="147.04" lengthAdjust="spacingAndGlyphs" stroke="#222" stroke-width="0.3" >Output Power</text><text x="1165.39" y="870.6" font-size="22" fill="#222" textLength="66.10" lengthAdjust="spacingAndGlyphs" stroke="#222" stroke-width="0.3" >Power</text><text x="1165.39" y="910.6" font-size="23" fill="#5f5f5f" textLength="111.16" lengthAdjust="spacingAndGlyphs" >Pout1 Max</text><text x="1355.59" y="916.2" font-size="22" fill="#222" textLength="51.58" lengthAdjust="spacingAndGlyphs" stroke="#222" stroke-width="0.3" >48 W</text><text x="1165.39" y="973.9" font-size="23" fill="#5f5f5f" textLength="111.16" lengthAdjust="spacingAndGlyphs" >Pout2 Max</text><text x="1355.22" y="979.5" font-size="22" fill="#222" textLength="39.26" lengthAdjust="spacingAndGlyphs" stroke="#222" stroke-width="0.3" >5 W</text><text x="1165.38" y="1036.4" font-size="23" fill="#5f5f5f" textLength="98.87" lengthAdjust="spacingAndGlyphs" >Pout Max</text><text x="1355.21" y="1042.0" font-size="22" fill="#222" textLength="51.97" lengthAdjust="spacingAndGlyphs" stroke="#222" stroke-width="0.3" >53 W</text><text x="1165.38" y="1098.9" font-size="23" fill="#5f5f5f" textLength="84.37" lengthAdjust="spacingAndGlyphs" >Pin Max</text><text x="1355.19" y="1104.5" font-size="22" fill="#222" textLength="84.38" lengthAdjust="spacingAndGlyphs" stroke="#222" stroke-width="0.3" >57.61 W</text><text x="1428.24" y="1179.2" font-size="25" fill="#fff" textLength="206.58" lengthAdjust="spacingAndGlyphs" >Show MPS Solution</text><text x="1995.33" y="829.9" font-size="23" fill="#fff" font-weight="700" textLength="70.22" lengthAdjust="spacingAndGlyphs" >Power</text><text x="1944.41" y="923.5" font-size="23" fill="#61666c" textLength="172.16" lengthAdjust="spacingAndGlyphs" stroke="#61666c" stroke-width="0.35" >Power Switches</text><text x="1963.24" y="1003.9" font-size="23" fill="#61666c" textLength="135.57" lengthAdjust="spacingAndGlyphs" stroke="#61666c" stroke-width="0.35" >Transformer</text><text x="1986.40" y="1034.4" font-size="23" fill="#61666c" textLength="88.05" lengthAdjust="spacingAndGlyphs" stroke="#61666c" stroke-width="0.35" >Primary</text><text x="1970.64" y="1064.6" font-size="23" fill="#61666c" textLength="119.75" lengthAdjust="spacingAndGlyphs" stroke="#61666c" stroke-width="0.35" >Inductance</text><text x="1940.47" y="1145.6" font-size="23" fill="#61666c" textLength="180.93" lengthAdjust="spacingAndGlyphs" stroke="#61666c" stroke-width="0.35" >Output Capacitor</text><text x="1958.30" y="1239.9" font-size="23" fill="#61666c" textLength="144.29" lengthAdjust="spacingAndGlyphs" stroke="#61666c" stroke-width="0.35" >RCD Snubber</text><text x="1990.73" y="1333.6" font-size="23" fill="#61666c" textLength="80.44" lengthAdjust="spacingAndGlyphs" stroke="#61666c" stroke-width="0.35" >Control</text></svg>
</body></html>
